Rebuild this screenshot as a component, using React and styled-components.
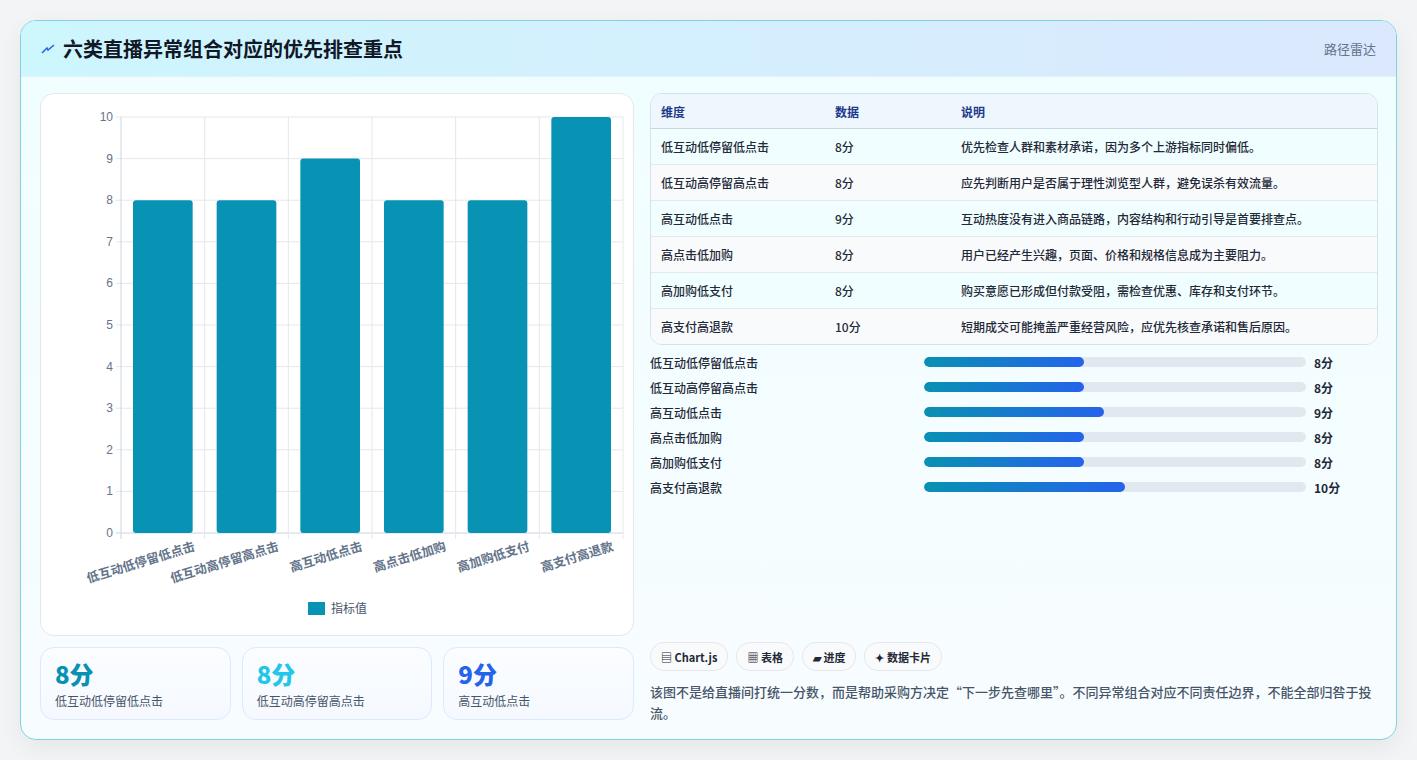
import React from "react";
import styled, { createGlobalStyle } from "styled-components";

const Global = createGlobalStyle`
  html,body{margin:0;padding:0;background:#f3f4f6;}
  body{font-family:"Noto Sans CJK SC","Noto Sans",sans-serif;color:#1f2937;}
`;
const Page = styled.div`padding:20px 20px 20px 20px;width:1417px;box-sizing:border-box;height:760px;background:#f3f4f6;`;
const Card = styled.div`
  width:1377px;height:720px;box-sizing:border-box;border:1px solid #7dd3e0;border-radius:16px;
  background:linear-gradient(180deg,#f0feff,#f7fcff);overflow:hidden;display:flex;flex-direction:column;
  box-shadow:0 8px 24px rgba(0,0,0,0.06);
`;
const Header = styled.div`
  height:55px;flex:none;display:flex;align-items:center;justify-content:space-between;padding:0 20px;
  background:linear-gradient(90deg,#cdf6fd,#dbe8fe);border-bottom:1px solid #e0f2f7;
`;
const Title = styled.h1`margin:0;font-size:20px;font-weight:700;color:#111827;display:flex;align-items:center;gap:8px;`;
const Tag = styled.span`font-size:13px;color:#64748b;`;
const Body = styled.div`flex:1;display:grid;grid-template-columns:594px 1fr;gap:16px;padding:16px 18px 16px 19px;`;
const Col = styled.div`display:flex;flex-direction:column;gap:11px;min-height:0;`;
const ChartBox = styled.div`height:543px;box-sizing:border-box;background:#fff;border:1px solid #e5e7eb;border-radius:14px;`;
const Stats = styled.div`display:grid;grid-template-columns:repeat(3,1fr);gap:11px;`;
const Stat = styled.div`height:73px;box-sizing:border-box;border:1px solid #dbeafe;border-radius:14px;background:linear-gradient(180deg,#fbfdff,#f5f9ff);padding:10px 14px;`;
const StatNum = styled.div`font-size:24px;font-weight:800;line-height:32px;color:${p=>p.c};`;
const StatLbl = styled.div`font-size:12px;color:#475569;margin-top:2px;`;
const Table = styled.div`border:1px solid #d6e0ee;border-radius:12px;overflow:hidden;background:#fff;`;
const Row = styled.div`display:grid;grid-template-columns:174px 126px 1fr;height:${p=>p.h||35}px;align-items:center;padding-left:10px;font-size:12px;
  background:${p=>p.head?"#eef6fe":p.alt?"#f8fafc":"#f0feff"};color:${p=>p.head?"#1e3a8a":"#1f2937"};
  font-weight:${p=>p.head?600:500};border-bottom:${p=>p.last?"none":"1px solid "+(p.head?"#cbd5e1":"#e5e7eb")};`;
const Bars = styled.div`display:flex;flex-direction:column;gap:7px;margin-top:8px;`;
const BarRow = styled.div`display:grid;grid-template-columns:274px 382px 1fr;align-items:center;height:18px;font-size:12px;font-weight:500;`;
const Track = styled.div`height:10px;border-radius:5px;background:#e2e8f0;overflow:hidden;`;
const Fill = styled.div`height:100%;border-radius:5px;background:linear-gradient(90deg,#0891b2,#2563eb);`;
const Val = styled.span`padding-left:8px;font-weight:700;font-size:12px;`;
const Spacer = styled.div`flex:1;`;
const Chips = styled.div`display:flex;gap:8px;`;
const Chip = styled.span`font-size:11px;font-weight:600;padding:0 10px;height:27px;display:flex;align-items:center;border:1px solid #e5e7eb;border-radius:14px;background:#f9fafb;color:#1f2937;`;
const Note = styled.p`margin:10px 0 0;font-size:13px;line-height:21px;color:#475569;font-weight:500;`;

const data=[["低互动低停留低点击",8,"优先检查人群和素材承诺，因为多个上游指标同时偏低。"],["低互动高停留高点击",8,"应先判断用户是否属于理性浏览型人群，避免误杀有效流量。"],["高互动低点击",9,"互动热度没有进入商品链路，内容结构和行动引导是首要排查点。"],["高点击低加购",8,"用户已经产生兴趣，页面、价格和规格信息成为主要阻力。"],["高加购低支付",8,"购买意愿已形成但付款受阻，需检查优惠、库存和支付环节。"],["高支付高退款",10,"短期成交可能掩盖严重经营风险，应优先核查承诺和售后原因。"]];

function Chart(){
  const x0=80,x1=582,y0=23,y1=439;const w=(x1-x0)/6;const yy=v=>y1-(y1-y0)*v/10;
  return <svg width="594" height="543" style={{display:"block"}}>
    {Array.from({length:11},(_,i)=><g key={i}><line x1={x0-5} x2={x1} y1={yy(i)} y2={yy(i)} stroke={i===0?"#cbd5e1":"#e5e7eb"}/>
      <text x={x0-8} y={yy(i)+4} textAnchor="end" fontSize="12" fill="#64748b" fontFamily="Liberation Sans">{i}</text></g>)}
    {Array.from({length:7},(_,i)=><line key={i} x1={x0+i*w} x2={x0+i*w} y1={y0} y2={y1+6} stroke={i===0?"#cbd5e1":"#e5e7eb"}/>)}
    {data.map((d,i)=><g key={i}><rect x={x0+i*w+12} y={yy(d[1])} width={w-24} height={y1-yy(d[1])} rx="3" fill="#0893b4"/>
      <text transform={`translate(${x0+i*w+w/2+33},${y1+17}) rotate(-17)`} textAnchor="end" fontSize="12.5" fontWeight="600" fill="#64748b">{d[0]}</text></g>)}
    <rect x="267" y="508" width="17" height="13" fill="#0893b4"/>
    <text x="290" y="519" fontSize="12" fill="#475569">指标值</text>
  </svg>;
}

export default function App(){
  return <Page><Global/><Card>
    <Header><Title><svg width="14" height="14" viewBox="0 0 14 14"><path d="M1 11 L6 6 L7 8 L13 3" stroke="#2563eb" strokeWidth="1.5" fill="none"/></svg>六类直播异常组合对应的优先排查重点</Title><Tag>路径雷达</Tag></Header>
    <Body>
      <Col>
        <ChartBox><Chart/></ChartBox>
        <Stats>
          <Stat><StatNum c="#0891b2">8分</StatNum><StatLbl>低互动低停留低点击</StatLbl></Stat>
          <Stat><StatNum c="#22c6e6">8分</StatNum><StatLbl>低互动高停留高点击</StatLbl></Stat>
          <Stat><StatNum c="#2563eb">9分</StatNum><StatLbl>高互动低点击</StatLbl></Stat>
        </Stats>
      </Col>
      <Col style={{gap:0}}>
        <Table>
          <Row head h={34}><span>维度</span><span>数据</span><span>说明</span></Row>
          {data.map((d,i)=><Row key={i} alt={i%2===1} last={i===5}><span>{d[0]}</span><span>{d[1]}分</span><span>{d[2]}</span></Row>)}
        </Table>
        <Bars>{data.map((d,i)=><BarRow key={i}><span>{d[0]}</span><Track><Fill style={{width:d[1]*5.25+"%"}}/></Track><Val>{d[1]}分</Val></BarRow>)}</Bars>
        <Spacer/>
        <Chips><Chip>▤ Chart.js</Chip><Chip>▦ 表格</Chip><Chip>▰ 进度</Chip><Chip>✦ 数据卡片</Chip></Chips>
        <Note>该图不是给直播间打统一分数，而是帮助采购方决定“下一步先查哪里”。不同异常组合对应不同责任边界，不能全部归咎于投流。</Note>
      </Col>
    </Body>
  </Card></Page>;
}
